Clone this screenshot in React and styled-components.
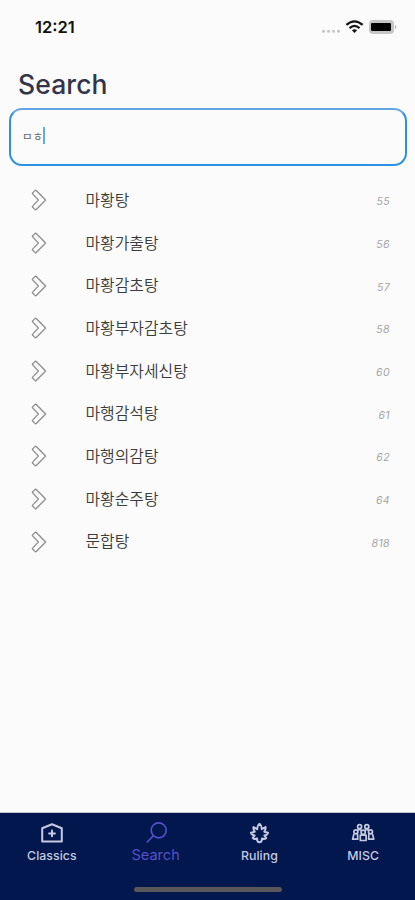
import React from 'react';
import styled, { createGlobalStyle } from 'styled-components';

const Global = createGlobalStyle`
  * { box-sizing: border-box; }
  body { margin: 0; background: #fbfbfb; font-family: Inter, "Noto Sans CJK KR", sans-serif; }
`;
const Screen = styled.div`
  width: 415px; height: 900px; overflow: hidden; display: flex; flex-direction: column; background: #fbfbfb;
`;
const StatusBar = styled.header`
  height: 54px; flex: none; display: flex; align-items: center; justify-content: space-between;
  padding: 0 18px 0 35px;
`;
const Time = styled.span`
  font-size: 16.5px; font-weight: 600; letter-spacing: 0; color: #111; line-height: 20px;
  padding-bottom: 1px;
`;
const StatusIcons = styled.div`
  display: flex; align-items: center; svg { display: block; }
`;
const Title = styled.h1`
  margin: 13px 0 0 18px; height: 34px; font-size: 26.5px; line-height: 34px; font-weight: 500;
  letter-spacing: 0.1px; color: #33344a; flex: none;
`;
const SearchField = styled.div`
  flex: none; height: 58px; margin: 7px 8px 0 9px; border: 2px solid #2e90e2; border-top-color: #62a5e5;
  border-radius: 13px; padding: 0 0 3px 11px; display: flex; align-items: center;
`;
const Query = styled.span`
  font: 400 11.5px/16px "Noto Sans CJK KR", sans-serif; color: #666; white-space: pre;
`;
const Caret = styled.i`
  width: 2px; height: 17px; background: #62aaeb;
`;
const List = styled.ul`
  list-style: none; margin: 13px 0 0; padding: 0; flex: 1;
`;
const Item = styled.li`
  height: 42.7px; display: grid; grid-template-columns: 54.5px 1fr auto; align-items: center;
  padding: 0 25px 0 31px; svg { display: block; }
`;
const Name = styled.span`
  font: 350 15.9px/22px "Noto Sans CJK KR", sans-serif; color: #3c3c3c; padding-bottom: 1px;
`;
const Code = styled.span`
  font-size: 10.5px; line-height: 14px; font-style: italic; letter-spacing: 0.4px; color: #a5a5a5; padding-top: 4px;
`;
const TabBar = styled.nav`
  flex: none; height: 88px; background: #02174d; border-top: 1px solid #c4c9d8;
  display: flex; flex-direction: column; align-items: center;
`;
const Tabs = styled.div`
  display: grid; grid-template-columns: repeat(4, 1fr); width: 100%; height: 74px;
`;
const Tab = styled.div`
  display: flex; flex-direction: column; align-items: center; padding-top: 8px;
  color: ${p => (p.$active ? '#5550cb' : '#c5cae0')};
  svg { display: block; height: 24px; }
`;
const Label = styled.span`
  font-size: ${p => (p.$active ? '14.5px' : '12.3px')}; line-height: 16px; margin-top: ${p => (p.$active ? '2px' : '3px')};
  font-weight: ${p => (p.$active ? 400 : 500)}; letter-spacing: 0.05px;
`;
const HomeIndicator = styled.div`
  width: 148px; height: 5px; border-radius: 3px; background: #5a5758;
`;

const rows = [
  ['마황탕', '55'], ['마황가출탕', '56'], ['마황감초탕', '57'],
  ['마황부자감초탕', '58'], ['마황부자세신탕', '60'], ['마행감석탕', '61'],
  ['마행의감탕', '62'], ['마황순주탕', '64'], ['문합탕', '818'],
];

const Chevron = () => (
  <svg width="16" height="22" viewBox="0 0 16 22" fill="none" stroke="#8e8e8e" strokeWidth="1.3" strokeLinejoin="round">
    <path d="M1.5 4 4.2 1.4Q4.8 1 5.3 1.5L14.6 11 5.3 20.5Q4.8 21 4.2 20.6L1.5 18Q1.2 17.5 1.6 17.1L7.4 11 1.6 4.9Q1.2 4.5 1.5 4Z" />
  </svg>
);
const iconProps = { fill: 'none', stroke: 'currentColor', strokeLinecap: 'round', strokeLinejoin: 'round' };
const ClassicsIcon = () => (
  <svg width="24" height="24" viewBox="0 0 24 24" {...iconProps} strokeWidth="2">
    <path d="M2.2 20.5V7.2L12 3.2 21.8 7.2V20.5Z" /><path d="M12 9.5V15.3M9.1 12.4H14.9" />
  </svg>
);
const SearchIcon = () => (
  <svg width="24" height="24" viewBox="0 0 24 24" {...iconProps} strokeWidth="1.7">
    <circle cx="14.7" cy="9.3" r="7.5" /><path d="M9.2 15 3.2 21" />
  </svg>
);
const RulingIcon = () => (
  <svg width="24" height="24" viewBox="0 0 24 24" {...iconProps} strokeWidth="2">
    <path d="M12.5 2.8Q10 4.8 10.2 8.2L6.5 6Q6 8.3 7.7 10.7L4 11.8Q4.9 14.2 7.7 14.5L5.7 17Q7.5 18.6 10 17.4 10 21 12.5 21.2 15 21 15 17.4 17.5 18.6 19.3 17L17.3 14.5Q20.1 14.2 21 11.8L17.3 10.7Q19 8.3 18.5 6L14.8 8.2Q15 4.8 12.5 2.8Z" />
  </svg>
);
const MiscIcon = () => (
  <svg width="24" height="24" viewBox="0 0 24 24" {...iconProps} strokeWidth="1.7">
    <circle cx="8.6" cy="5.7" r="2" /><circle cx="15.8" cy="5.7" r="2" />
    <circle cx="4.9" cy="10.8" r="2" /><circle cx="12.2" cy="11.3" r="2.1" /><circle cx="19.5" cy="10.8" r="2" />
    <path d="M2.8 13.5 1.6 18.1H6.8L6.5 13.2M17.9 13.2 17.6 18.1H22.8L21.6 13.5M9.3 14.2V19.5H15.1V14.2ZM6.8 9.3 8.6 8.2 10.3 9.7M14.1 9.7 15.8 8.2 17.6 9.3" />
  </svg>
);
const tabs = [['Classics', ClassicsIcon], ['Search', SearchIcon], ['Ruling', RulingIcon], ['MISC', MiscIcon]];

export default function App() {
  return (
    <Screen>
      <Global />
      <StatusBar>
        <Time>12:21</Time>
        <StatusIcons>
          <svg width="76" height="16" viewBox="0 0 76 16">
            <g fill="#c4c4c4"><circle cx="2.5" cy="12.3" r="1.5" /><circle cx="7.5" cy="12.3" r="1.5" /><circle cx="12.5" cy="12.3" r="1.5" /><circle cx="17.5" cy="12.3" r="1.5" /></g>
            <g fill="none" stroke="#161616" strokeWidth="2.3">
              <path d="M25.4 5.9Q33.5-1.1 41.6 5.9" /><path d="M28.5 9.1Q33.5 4.7 38.5 9.1" />
            </g>
            <path d="M30.9 11.3Q33.5 9 36.1 11.3L33.5 14Z" fill="#161616" />
            <rect x="48" y="1" width="25" height="14" rx="4" fill="#c6c6c6" />
            <path d="M74 5.7Q76.5 8 74 10.3Z" fill="#aaa" />
            <rect x="50" y="4" width="20" height="8" rx="1.2" fill="#000" />
          </svg>
        </StatusIcons>
      </StatusBar>
      <Title>Search</Title>
      <SearchField><Query>ㅁㅎ</Query><Caret /></SearchField>
      <List>
        {rows.map(([name, code]) => (
          <Item key={name}><Chevron /><Name>{name}</Name><Code>{code}</Code></Item>
        ))}
      </List>
      <TabBar>
        <Tabs>
          {tabs.map(([label, Icon]) => (
            <Tab key={label} $active={label === 'Search'}><Icon /><Label $active={label === 'Search'}>{label}</Label></Tab>
          ))}
        </Tabs>
        <HomeIndicator />
      </TabBar>
    </Screen>
  );
}
